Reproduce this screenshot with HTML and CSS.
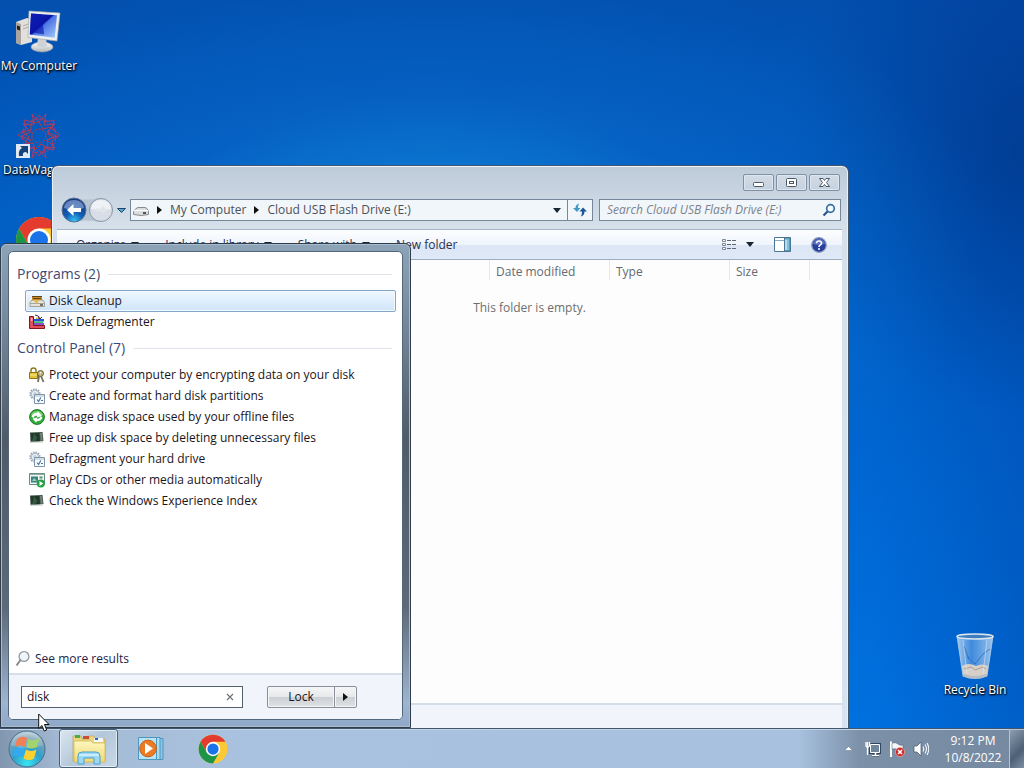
FILE: index.html
```html
<!DOCTYPE html>
<html lang="en">
<head>
<meta charset="utf-8">
<title>Desktop</title>
<link rel="stylesheet" href="styles.css">
</head>
<body>
<svg class="defs" aria-hidden="true">
  <defs>
    <linearGradient id="screen" x1="0" y1="0" x2="1" y2="1"><stop offset="0" stop-color="#1a2fc4"/><stop offset=".45" stop-color="#0712a0"/><stop offset=".5" stop-color="#4a74e6"/><stop offset="1" stop-color="#a9cdfb"/></linearGradient>
    <linearGradient id="metal" x1="0" y1="0" x2="0" y2="1"><stop offset="0" stop-color="#fdfdfd"/><stop offset="1" stop-color="#b4b8ba"/></linearGradient>
    <radialGradient id="back" cx=".5" cy=".95" r=".8"><stop offset="0" stop-color="#35c4f5"/><stop offset=".45" stop-color="#1360b8"/><stop offset="1" stop-color="#173a84"/></radialGradient>
    <linearGradient id="bin" x1="0" y1="0" x2="1" y2="0"><stop offset="0" stop-color="#c2dcf3" stop-opacity=".85"/><stop offset=".4" stop-color="#5b9ce4" stop-opacity=".7"/><stop offset="1" stop-color="#b9d6f2" stop-opacity=".85"/></linearGradient>
    <radialGradient id="orb" cx=".5" cy=".9" r=".9"><stop offset="0" stop-color="#39e4ee"/><stop offset=".45" stop-color="#2fa0cc"/><stop offset=".8" stop-color="#7fa3b8"/><stop offset="1" stop-color="#c3d6e1"/></radialGradient>
    <linearGradient id="folder" x1="0" y1="0" x2="0" y2="1"><stop offset="0" stop-color="#fdf7bf"/><stop offset="1" stop-color="#efd774"/></linearGradient>
    <symbol id="chrome" viewBox="0 0 48 48">
      <circle cx="24" cy="24" r="23" fill="#fcc934"/>
      <path d="M24 24 4.1 12.5A23 23 0 0 1 43.9 12.5H24z" fill="#e33b2e"/>
      <path d="M4.1 12.5 14 29.7 24 24V12.5z" fill="#e33b2e"/>
      <path d="M4.1 12.5 14 29.7 24 35l10-5.300L24 47A23 23 0 0 1 4.1 12.5z" fill="#1e9447"/>
      <circle cx="24" cy="24" r="11.5" fill="#fff"/><circle cx="24" cy="24" r="9" fill="#1a73e8"/>
    </symbol>
    <symbol id="settings" viewBox="0 0 16 16">
      <circle cx="6" cy="6" r="4.6" fill="#e3eaf0" stroke="#8fa1b0" stroke-width="2" stroke-dasharray="1.4 1"/>
      <circle cx="6" cy="6" r="3.6" fill="#eef3f7" stroke="#9fb0bf" stroke-width=".8"/><circle cx="6" cy="6" r="1.3" fill="#fff" stroke="#8fa1b0" stroke-width=".7"/>
      <path d="M5.5 6.5h10v9h-10z" fill="#fafdff" stroke="#7e95a9"/><path d="M6 8h9" stroke="#a8bccc"/>
      <path d="m8 11.5 1.6 2 2.2-4" fill="none" stroke="#4f6f97" stroke-width="1.2"/><path d="M12 12.5h2" stroke="#4f6f97"/>
    </symbol>
    <symbol id="monitor" viewBox="0 0 16 16">
      <path d="M1 2.5 13.5 2l1 9-13 1.200z" fill="#3d5046"/><path d="m2 3.300 8-.3 1 8.300-8.600.7z" fill="#203829"/>
      <path d="M5 3.300 8.500 8 6 11.500H3z" fill="#355943"/><path d="m11 3 2-.1.700 7.500-2 .3z" fill="#758379"/><path d="M1 12h13" stroke="#b8c1bd"/>
    </symbol>
  </defs>
</svg>

<div class="desktop">
  <main class="workspace">
    <nav class="shortcuts" aria-label="Desktop icons">
      <a class="shortcut" href="#computer">
        <svg class="shortcut-icon" viewBox="0 0 48 48" aria-hidden="true">
          <path d="m1 14 11-4 5 2v22L6 37l-5-2z" fill="#e3e0dc"/><path d="m1 14 5 2v21l-5-2z" fill="#a9a49f"/><path d="M2 17.500 5 18.500v4l-3-1z" fill="#222"/><path d="m8 18 5-2M8 21l5-2" stroke="#aaa"/>
          <ellipse cx="27" cy="39" rx="11" ry="5" fill="url(#metal)" stroke="#9b9fa2" stroke-width=".6"/><path d="m23 29 8 1 1 8q-5 2-10 0z" fill="#cfd3d5"/>
          <path d="m14 3 31 2-3 28-29-3.500z" fill="#eceff0" stroke="#a7abad" stroke-width=".7"/><path d="m16 5.500 26 1.800-2.300 22.500-25-3.200z" fill="url(#screen)"/>
          <path d="m27 6.200 2 20-14-2 1-18.700z" fill="#0a16ae" opacity=".65"/>
        </svg>
        <span>My Computer</span>
      </a>
      <a class="shortcut long" href="#datawagon">
        <svg class="shortcut-icon" viewBox="0 0 48 48" aria-hidden="true">
          <g fill="none" stroke="#b83a60" stroke-width=".9">
            <path d="m24 3 6 7 9-2-2 9 8 6-8 6 2 9-9-2-6 8-6-8-9 2 2-9-8-6 8-6-2-9 9 2z"/>
            <path d="m17 2 2 11-11-1 8 8-10 4 10 4-8 8 11-1-2 11 7-8 7 8-2-11 11 1-8-8 10-4-10-4 8-8-11 1 2-11-7 8z"/>
            <path d="m24 10 4 7 8-2-3 7 6 3-7 3 1 8-7-4-6 6-2-7-8 1 4-7-6-5 8-2v-7z" stroke="#cf3340"/>
            <circle cx="24" cy="24" r="7" stroke="#d32f38" stroke-dasharray="3 1"/><circle cx="24" cy="24" r="17" stroke-dasharray="5 2"/>
          </g>
          <path d="M1 32h14v14H1z" fill="#dfeaf6"/><path d="M4 44q-1-6 3-8L5 34h8v8l-2-2q-4 0-3 4z" fill="#164377"/>
        </svg>
        <span>DataWagon</span>
      </a>
      <a class="shortcut" href="#chrome-browser" aria-label="Google Chrome">
        <svg class="shortcut-icon" aria-hidden="true"><use href="#chrome"/></svg>
      </a>
    </nav>
    <a class="shortcut recycle" href="#recycle">
      <svg class="shortcut-icon" viewBox="0 0 48 48" aria-hidden="true">
        <path d="m6 4 6 40q12 5 24 0l6-40z" fill="url(#bin)" stroke="#b8d3ee" stroke-width=".8"/>
        <path d="m11 34 1 9q12 5 24 0l1-9q-6-3-12 0-8-4-14 0z" fill="#d8cfc8"/><path d="m13 37 7-2 4 3 8-3 3 2" stroke="#a99f98" fill="none"/>
        <path d="m16 25 8 7 8-10 7-5M13 14l5 13" fill="none" stroke="#2863b4" opacity=".7"/><path d="m12 8 4 34M36 8l-4 34" stroke="#e3f1fc" opacity=".5"/>
        <ellipse cx="24" cy="4.500" rx="18" ry="2.500" fill="#3f7cc0" stroke="#dbe6ee" stroke-width="1.600"/><path d="M12 43q12 5 24 0" fill="none" stroke="#b4bcc4" stroke-width="2.500"/>
      </svg>
      <span>Recycle Bin</span>
    </a>

    <section class="explorer" aria-label="Cloud USB Flash Drive (E:)">
      <header class="titlebar">
        <button class="caption" aria-label="Minimize"><svg width="13" height="11" viewBox="0 0 13 11"><rect x="1.500" y="5.500" width="10" height="4" rx="1" fill="#fff" stroke="#4b5868"/></svg></button>
        <button class="caption" aria-label="Maximize"><svg width="13" height="11" viewBox="0 0 13 11"><rect x="1.500" y="1.500" width="10" height="8" rx="1" fill="#fff" stroke="#4b5868"/><rect x="4.500" y="4.500" width="4" height="2" fill="#fff" stroke="#4b5868"/></svg></button>
        <button class="caption" aria-label="Close"><svg width="13" height="11" viewBox="0 0 13 11"><path d="M1.500 1.500H5L6.500 3.500 8 1.500h3.500L8.500 5.500l3 4H8l-1.500-2-1.500 2H1.500l3-4z" fill="#fff" stroke="#4b5868"/></svg></button>
      </header>
      <div class="navbar">
        <div class="history">
          <button class="plain" aria-label="Back and forward"><svg width="66" height="26" viewBox="0 0 66 26">
            <path d="M13 1q13 3 27 0v24q-14-3-27 0z" fill="#b7c4d1"/>
            <circle cx="14" cy="13" r="12" fill="url(#back)" stroke="#5b7592"/><path d="M4 11q1-8 10-8t10 8q-10 4-20 0" fill="#b8cff0" opacity=".5"/>
            <path d="m7 13 6.500-6v4H21v4h-7.500v4z" fill="#fff"/>
            <circle cx="41" cy="13" r="11.500" fill="#d7dee6" stroke="#8796a6"/><path d="M31 12q1-9 10-9t10 9q-10 2-20 0" fill="#eef2f6"/><path d="m47 13-5-4.500v3h-6v3h6v3z" fill="#dfe5eb"/>
            <path d="M57.500 11.500h8l-4 4z" fill="#4aa5d0" stroke="#24456a"/>
          </svg></button>
        </div>
        <div class="address">
          <svg width="16" height="12" viewBox="0 0 16 12" aria-hidden="true"><path d="m3 4.500 2-1h7l2 1 1.500 3v3q-7 2-15 0v-3z" fill="#dadddd" stroke="#868b8e"/><path d="M1 6.500h14" stroke="#fff"/><path d="M10 9h3" stroke="#555" stroke-width="2"/></svg>
          <span class="crumb-arrow"></span><a href="#computer">My Computer</a>
          <span class="crumb-arrow"></span><a href="#drive">Cloud USB Flash Drive (E:)</a>
          <button class="plain recent" aria-label="Previous locations"><span class="down"></span></button>
          <button class="plain refresh" aria-label="Refresh"><svg width="14" height="14" viewBox="0 0 14 14"><path d="M6 .5Q2.500 1.500 2.500 5H0l4 4 3.500-4H5Q5 3 6 .500z" fill="#3f9bc6"/><path d="M8 13.500q3.500-1 3.500-5H14l-4-4-3.500 4H9q0 3-1 5z" fill="#1b5796"/></svg></button>
        </div>
        <label class="search">
          <input type="text" placeholder="Search Cloud USB Flash Drive (E:)" aria-label="Search Cloud USB Flash Drive (E:)">
          <svg width="14" height="14" viewBox="0 0 14 14" aria-hidden="true"><circle cx="8.500" cy="5.500" r="3.800" fill="#f5faff" stroke="#38709f" stroke-width="1.700"/><path d="m5.500 8.500-4 4" stroke="#274f86" stroke-width="2.200"/></svg>
        </label>
      </div>
      <div class="pane">
        <div class="toolbar">
          <button class="plain">Organize <span class="down"></span></button>
          <button class="plain">Include in library <span class="down"></span></button>
          <button class="plain">Share with <span class="down"></span></button>
          <button class="plain">New folder</button>
          <div class="tools">
            <button class="plain view" aria-label="Change your view"><svg width="16" height="14" viewBox="0 0 16 14"><path d="M1.500 1.500h3v2h-3zM1.500 5.500h3v2h-3zM1.500 9.500h3v2h-3z" fill="#fff" stroke="#7e8893"/><path d="M6 2.500h4m1 0h4m-9 4h4m1 0h4m-9 4h4m1 0h4" stroke="#5d6974"/></svg><span class="down"></span></button>
            <button class="plain" aria-label="Show the preview pane"><svg width="17" height="15" viewBox="0 0 17 15"><path d="M.5.500h16v14H.5z" fill="#fff" stroke="#4a7694"/><path d="M1 3.500h10" stroke="#86a9c0"/><path d="M10.500 1h5.500v13h-5.500z" fill="#7fc0dc" stroke="#4a7694"/><path d="M12 3v10" stroke="#c8e7f3" stroke-width="1.500"/></svg></button>
            <button class="plain" aria-label="Help"><svg width="16" height="16" viewBox="0 0 16 16"><circle cx="8" cy="8" r="7.300" fill="#273f9c" stroke="#8e9bbd" stroke-width="1.200"/><path d="M2 7q1-5 6-5t6 5q-6 2-12 0" fill="#7188cf" opacity=".7"/><path d="M5.500 6.200Q5.700 4 8 4t2.500 2q0 1.200-1.300 2Q8 8.700 8 10" fill="none" stroke="#fff" stroke-width="1.600"/><circle cx="8" cy="12" r="1" fill="#fff"/></svg></button>
          </div>
        </div>
        <div class="files">
          <div class="tree"></div>
          <div class="listing">
            <table class="columns">
              <thead><tr><th class="name" aria-label="Name"></th><th class="mid">Date modified</th><th class="mid">Type</th><th class="size">Size</th><th aria-hidden="true"></th></tr></thead>
            </table>
            <p class="empty">This folder is empty.</p>
          </div>
        </div>
        <div class="details"></div>
      </div>
    </section>
  </main>

  <section class="menu" aria-label="Start menu">
    <div class="menu-panel">
      <div class="results">
        <h2>Programs (2)</h2>
        <a class="result selected" href="#cleanup"><svg class="icon" viewBox="0 0 16 16" aria-hidden="true"><path d="M1 9.500 3 7h11l1.500 2.500v4H1z" fill="#e5e2d8" stroke="#948f80" stroke-width=".8"/><path d="M1 10.500h14" stroke="#a7a69c"/><path d="M3 3h10v4H3z" fill="#c98c28"/><path d="M3 3.500h10M4 5.500h8" stroke="#5f4310"/><path d="m4 7 4 4 2-4z" fill="#e6b55a"/><path d="M11 12h3" stroke="#505050" stroke-width="1.500"/></svg>Disk Cleanup</a>
        <a class="result" href="#defragmenter"><svg class="icon" viewBox="0 0 16 16" aria-hidden="true"><path d="M.5 2.500h4v9h11v3H.5z" fill="#e2505a" stroke="#84131f"/><path d="M5 5h10v2.500H5z" fill="#2952dc"/><path d="M5 7.500h9V9H5z" fill="#35c653"/><path d="M5 9h10v2H5z" fill="#8a4fd0"/><path d="M7 3.500h5V5H7z" fill="#e5b93a"/><path d="M6 1q4 0 5 4M9 3.500 11 5l2-2" fill="none" stroke="#302c62"/><path d="M2 4h1.500v3H2z" fill="#fbc0c0"/></svg>Disk Defragmenter</a>
        <h2>Control Panel (7)</h2>
        <a class="result" href="#bitlocker"><svg class="icon" viewBox="0 0 16 16" aria-hidden="true"><path d="M2 6V3.500Q2 1 4.500 1T7 3.500V6" fill="none" stroke="#8f7b25" stroke-width="1.500"/><path d="M.5 5.500h8v6h-8z" fill="#e0c23b" stroke="#8e7419"/><path d="M1 8h7" stroke="#f8ea91"/><circle cx="11.500" cy="6.500" r="3" fill="#c7b67a" stroke="#5d5941"/><circle cx="11.500" cy="5.800" r=".8" fill="#fff"/><path d="m10 9-1 6M12 9l2.500 6" stroke="#75705b" stroke-width="1.800"/></svg>Protect your computer by encrypting data on your disk</a>
        <a class="result" href="#partitions"><svg class="icon" aria-hidden="true"><use href="#settings"/></svg>Create and format hard disk partitions</a>
        <a class="result" href="#offline"><svg class="icon" viewBox="0 0 16 16" aria-hidden="true"><circle cx="8" cy="8" r="7.400" fill="#35ac3e" stroke="#197925"/><path d="M2 6q2-4 6-4 4 0 6 4-6 2-12 0" fill="#90dd80" opacity=".8"/><path d="M2.500 7.500Q4 3.500 8 4l1-1.500L13 7 8 8.500V6.500Q5.500 6 4.500 9zM13.500 8.500Q12 12.500 8 12l-1 1.500L3.500 9.500 8 8.500v1.200q2.500.3 3.500-2.200z" fill="#fff"/></svg>Manage disk space used by your offline files</a>
        <a class="result" href="#free"><svg class="icon" aria-hidden="true"><use href="#monitor"/></svg>Free up disk space by deleting unnecessary files</a>
        <a class="result" href="#defragment"><svg class="icon" aria-hidden="true"><use href="#settings"/></svg>Defragment your hard drive</a>
        <a class="result" href="#autoplay"><svg class="icon" viewBox="0 0 16 16" aria-hidden="true"><path d="M.5 1.500h15v11H.5z" fill="#eef5f2" stroke="#688b80"/><path d="M1 2.500h14" stroke="#90b2a6"/><path d="M2 4.500h7v6H2z" fill="#3c817f"/><path d="m3 9 2-3 3 3z" fill="#9ad1b1"/><path d="M10.500 5.500h3" stroke="#5e8c7d" stroke-width="2"/><circle cx="11.800" cy="11.500" r="4" fill="#24a142"/><path d="m10.500 9 3.800 2.500-3.800 2.500z" fill="#fff"/></svg>Play CDs or other media automatically</a>
        <a class="result" href="#experience"><svg class="icon" aria-hidden="true"><use href="#monitor"/></svg>Check the Windows Experience Index</a>
      </div>
      <a class="more" href="#more"><svg width="16" height="18" viewBox="0 0 16 18" aria-hidden="true"><circle cx="9" cy="6.500" r="4.900" fill="#eef5fa" stroke="#92999f" stroke-width="1.300"/><path d="M7 5q1-2 3-1.500" stroke="#fff" stroke-width="1.500" fill="none"/><path d="m5.500 10-4 5.500" stroke="#858b90" stroke-width="2"/></svg>See more results</a>
      <form class="menu-foot">
        <div class="query"><input type="text" value="disk" aria-label="Search programs and files"><button type="button" class="plain" aria-label="Clear search"><svg width="8" height="8" viewBox="0 0 8 8"><path d="m1 1 6 6m0-6-6 6" stroke="#6c747c" stroke-width="1.200"/></svg></button></div>
        <div class="power"><button type="button">Lock</button><button type="button" aria-label="More options"><span class="crumb-arrow"></span></button></div>
      </form>
    </div>
  </section>

  <footer class="taskbar">
    <button class="plain start" aria-label="Start"><svg width="38" height="38" viewBox="0 0 38 38">
      <circle cx="19" cy="19" r="18" fill="url(#orb)" stroke="#486f8b"/>
      <path d="M9 9q5-4 10-1l-2 9q-5-3-10 0z" fill="#f0602a"/><path d="M20.500 9q5 3 11-1l-2.500 9q-5 3-10.500 0z" fill="#8cc846"/>
      <path d="M6.500 18.500q5-3 10 0l-2 9q-5-3-10-1z" fill="#35a9f0"/><path d="M18 19.500q5 3 10.500 0l-2.500 9q-5 3-10.500 0z" fill="#fdd032"/>
      <path d="M3 15Q6 3 19 2.500T35 15q-16 7-32 0" fill="#fff" opacity=".2"/>
    </svg></button>
    <button class="plain task active" aria-label="Windows Explorer"><svg width="36" height="32" viewBox="0 0 36 32">
      <path d="M2 5V3h8l1 3h7V3h5l1 3h10v22H2z" fill="#ecd67c" stroke="#bda550" stroke-width=".7"/><path d="M4 2h5v3H4z" fill="#4caa4b"/><path d="M12 3h6v3h-6z" fill="#c94f38"/><path d="M23 5h9v4h-9z" fill="#f4f7fb"/><path d="M24 5h3v2h-3z" fill="#3265b5"/>
      <path d="M3 8h17l2 2h12v19H3z" fill="url(#folder)" stroke="#cfb558" stroke-width=".7"/>
      <path d="M7 31v-8q0-4 4-4h14q4 0 4 4v8h-6v-6H13v6z" fill="#9bd8f4" stroke="#4f9fcb"/><path d="M8 22h20" stroke="#d8f4ff" stroke-width="1.500"/>
    </svg></button>
    <button class="plain task" aria-label="Media Player"><svg width="28" height="26" viewBox="0 0 28 26">
      <path d="M10 2.500h16v21H10z" fill="#8bc6e5" stroke="#4d96be"/><path d="M6 1.500h17v22H6z" fill="#aadcf1" stroke="#4d96be"/><path d="M1.500 1.500h18v22h-18z" fill="#b9e3f3" stroke="#4d96be"/>
      <circle cx="11" cy="12.500" r="8.300" fill="#ec7b23" stroke="#c85d17"/><path d="m8 7 8 5.500L8 18z" fill="#fff"/>
    </svg></button>
    <button class="plain task" aria-label="Google Chrome"><svg width="30" height="30"><use href="#chrome"/></svg></button>
    <div class="tray">
      <button class="plain" aria-label="Show hidden icons"><svg width="9" height="5" viewBox="0 0 9 5"><path d="M.5 4.500 4.500.500l4 4z" fill="#fff" stroke="#64778d" stroke-width=".5"/></svg></button>
      <button class="plain" aria-label="Network"><svg width="16" height="16" viewBox="0 0 16 16"><path d="M5.500 3.500h9v8h-9zM7 14.500h7M10.500 12v2" fill="none" stroke="#30465e" stroke-width="3"/><path d="M5.500 3.500h9v8h-9z" fill="#71869c" stroke="#fff"/><path d="M7 14.500h7M10.500 12v2" stroke="#fff" stroke-width="1.500"/><path d="M1 1v4q0 1 1.500 1T4.500 5V1M2.500 1v13" fill="none" stroke="#fff" stroke-width="1.300"/></svg></button>
      <button class="plain" aria-label="Action Center"><svg width="16" height="16" viewBox="0 0 16 16"><path d="M2 .500V16" stroke="#fff" stroke-width="2"/><path d="M3 2q4-1 6 1t5 1v6q-3 1-5-1T3 8z" fill="#f5f7f9" stroke="#435970" stroke-width=".5"/><circle cx="11" cy="11" r="4.600" fill="#cf2b2b" stroke="#f2a8a8" stroke-width=".7"/><path d="m9 9 4 4m0-4-4 4" stroke="#fff" stroke-width="1.600"/></svg></button>
      <button class="plain" aria-label="Volume"><svg width="16" height="16" viewBox="0 0 16 16"><path d="M1 5h3l4-4v14l-4-4H1z" fill="#fff" stroke="#42566b" stroke-width=".7"/><path d="M10 5.500q1.500 2.500 0 5M12 3.500q3 4.500 0 9M14 2q3.500 6 0 12" fill="none" stroke="#f3f7fa" stroke-width="1.100"/></svg></button>
      <button class="plain clock"><time>9:12 PM</time><time>10/8/2022</time></button>
      <button class="plain peek" aria-label="Show desktop"></button>
    </div>
  </footer>
  <svg class="pointer" width="12" height="19" viewBox="0 0 12 19" aria-hidden="true"><path d="M.700 1v14.500L4 12.500l2.200 5.500 2.500-1L6.500 11.500H11z" fill="#fff" stroke="#111"/></svg>
</div>
</body>
</html>
```

FILE: styles.css
```css
* { box-sizing: border-box; }

body {
  margin: 0;
  font: 12px/16px "Open Sans", "Noto Sans", sans-serif;
  color: #1b1420;
}

a { color: inherit; text-decoration: none; }
button, input { font: inherit; color: inherit; }
svg { display: block; flex: none; }
.defs { position: absolute; width: 0; height: 0; }

.plain {
  display: flex;
  align-items: center;
  justify-content: center;
  padding: 0;
  border: 0;
  background: none;
}

.desktop {
  position: relative;
  display: flex;
  flex-direction: column;
  height: 100vh;
  overflow: hidden;
  background:
    radial-gradient(ellipse 560px 300px at 42% 32%, rgba(24, 146, 226, .8), rgba(10, 110, 206, .45) 50%, transparent),
    radial-gradient(ellipse 240px 260px at 100% 20%, rgba(0, 50, 130, .6), transparent),
    linear-gradient(90deg, transparent 85%, rgba(0, 62, 160, .35)),
    linear-gradient(#024fae, #005cc2 30%, #0068d4 65%, #0072e0);
}

.workspace {
  flex: 1;
  display: flex;
  justify-content: space-between;
  align-items: flex-end;
  min-height: 0;
}

.shortcuts {
  align-self: flex-start;
  display: flex;
  flex-direction: column;
  gap: 36px;
  padding-top: 8px;
}

.shortcut {
  display: flex;
  flex-direction: column;
  align-items: center;
  gap: 2px;
  width: 78px;
  color: #fff;
  text-shadow: 0 1px 2px #000, 1px 1px 2px #000;
  white-space: nowrap;
}
.shortcuts .shortcut { height: 68px; }
.shortcut-icon { width: 48px; height: 48px; }
.long span { align-self: flex-start; padding-left: 3px; }
.recycle { width: 98px; padding-bottom: 30px; }

/* Explorer window */
.explorer {
  position: absolute;
  inset: 165px 175px 40px 51px;
  display: flex;
  flex-direction: column;
  padding: 0 6px 0 5px;
  border: 1px solid #44566b;
  border-bottom: 0;
  border-radius: 7px 7px 0 0;
  background: linear-gradient(#bdcad8, #d5e0ea 60px, #d6e3f0);
  box-shadow: inset 0 1px #eef4fa, inset 1px 0 #e9f1f8, inset -1px 0 #e9f1f8;
}
.titlebar { display: flex; justify-content: flex-end; gap: 2px; padding: 8px 2px 0; }
.caption {
  display: flex;
  align-items: center;
  justify-content: center;
  width: 31px;
  height: 17px;
  padding: 0;
  border: 1px solid #8190a3;
  border-radius: 2px;
  background: linear-gradient(#d2dce7, #c5d1de);
  box-shadow: inset 0 0 0 1px #dde6ee;
}
.navbar { display: flex; align-items: center; gap: 6px; padding: 6px 1px 6px 3px; }
.history { margin-right: -2px; }
.address, .search {
  display: flex;
  align-items: center;
  height: 22px;
  border: 1px solid #77879a;
  background: #f1f6fb;
  color: #4c5158;
}
.address { flex: 1; gap: 8px; padding-left: 2px; }
.crumb-arrow {
  border: 4px solid transparent;
  border-left: 5px solid #111;
  border-right: 0;
}
.down {
  border: 4px solid transparent;
  border-top: 5px solid #1a2533;
  border-bottom: 0;
}
.recent { margin: 0 -2px 0 auto; }
.refresh { width: 25px; height: 20px; border-left: 1px solid #77879a; }
.search { width: 242px; padding: 0 4px 0 7px; }
.search input { flex: 1; min-width: 0; padding: 0; border: 0; outline: 0; background: none; font-style: italic; }
.search input::placeholder { color: #7d828a; opacity: 1; }

.pane { flex: 1; display: flex; flex-direction: column; min-height: 0; background: #fdfdfd; }
.toolbar {
  display: flex;
  align-items: center;
  height: 31px;
  padding: 0 15px 0 19px;
  gap: 26px;
  border-top: 1px solid #a5b5c7;
  border-bottom: 1px solid #9fadc1;
  background: linear-gradient(#fdfeff, #eff4fc 50%, #dde6f5 51%, #dfe8f6);
  color: #2b2f4c;
}
.toolbar .plain { gap: 5px; }
.tools { display: flex; align-items: center; gap: 20px; margin-left: auto; }
.toolbar .view { gap: 9px; }
.files { flex: 1; display: flex; min-height: 0; }
.tree { width: 160px; }
.listing { flex: 1; }
.columns { width: 100%; height: 20px; border-spacing: 0; table-layout: fixed; }
.columns th { height: 20px; padding: 4px 6px 0; border-right: 1px solid #e3e9f0; font-weight: 400; text-align: left; color: #646a73; }
.columns th:last-child { border: 0; }
.name { width: 273px; }
.mid { width: 120px; }
.size { width: 80px; }
.empty { margin: 20px 0 0; text-align: center; color: #6d6d6d; }
.details { height: 25px; border-top: 2px solid #d5dde8; background: #f1f5fb; }

/* Start menu */
.menu {
  position: absolute;
  left: 0;
  bottom: 40px;
  width: 411px;
  height: 485px;
  padding: 7px;
  border: 1px solid #303d4c;
  border-radius: 6px 6px 0 0;
  background: linear-gradient(#8ca3b8, #778b9f 15%, #505b66 40%, #5c6977 75%, #9eb4cf 95%, #8fa8c8);
  box-shadow: inset 0 0 0 1px #a9bccd;
}
.menu-panel {
  display: flex;
  flex-direction: column;
  height: 100%;
  border: 1px solid #53677c;
  border-radius: 5px;
  background: #fff;
  overflow: hidden;
}
.results { flex: 1; padding: 6px 6px 0 16px; }
.results h2 {
  display: flex;
  align-items: center;
  gap: 8px;
  height: 32px;
  margin: 0 4px 0 -8px;
  font-size: 14px;
  font-weight: 400;
  color: #3d4a76;
}
.results h2::after { content: ""; flex: 1; border-top: 1px solid #dfe4ea; }
.result {
  display: flex;
  align-items: center;
  gap: 4px;
  height: 21px;
  padding-left: 3px;
  border: 1px solid transparent;
  border-radius: 2px;
}
.selected { height: 22px; margin-bottom: -1px; border-color: #83a7cb; background: linear-gradient(#eff7fe, #cfe5fb); box-shadow: inset 0 0 0 1px #f3f9ff; }
.icon { width: 16px; height: 16px; }
.more { display: flex; align-items: center; gap: 4px; height: 28px; padding-left: 6px; color: #1e2347; }
.menu-foot { display: flex; align-items: center; gap: 24px; height: 46px; margin: 0; padding-left: 12px; border-top: 2px solid #d7dee8; background: #f1f5fb; }
.query { display: flex; width: 222px; height: 22px; border: 1px solid #53606f; background: #fff; }
.query input { flex: 1; min-width: 0; padding: 0 5px; border: 0; outline: 0; background: none; }
.query .plain { width: 24px; }
.power { display: flex; height: 22px; }
.power button {
  display: flex;
  align-items: center;
  justify-content: center;
  width: 68px;
  padding: 0;
  border: 1px solid #8b9098;
  border-radius: 2px 0 0 2px;
  background: linear-gradient(#f6f7f8, #e6e8ea 48%, #cdd0d4 52%, #dfe1e4);
  box-shadow: inset 0 0 0 1px #f5f6f7;
}
.power button + button { width: 23px; margin-left: -1px; border-radius: 0 2px 2px 0; }

/* Taskbar */
.taskbar {
  position: relative;
  display: flex;
  align-items: center;
  height: 40px;
  border-top: 1px solid #40566e;
  background: linear-gradient(90deg, #8197b0, #a4bad4 60px, #a9c2df 250px, #a7c1de 78%, #7c90a8 84%, #7589a1);
  box-shadow: inset 0 1px #c5d6e7;
}
.start { width: 54px; }
.task { width: 59px; height: 39px; margin-right: 3px; }
.start + .task { margin-left: 5px; }
.active { border: 1px solid #4b6178; border-radius: 3px; background: linear-gradient(135deg, #dbe6f0, #b3c7da 50%, #c8d8e7); box-shadow: inset 0 0 0 1px #e2ecf5; }
.tray { display: flex; align-items: center; gap: 8px; height: 100%; margin-left: auto; }
.tray .plain:first-child { margin-right: 4px; }
.clock { flex-direction: column; width: 72px; color: #fff; line-height: 17px; }
.peek { width: 15px; height: 39px; margin-left: -8px; border: 1px solid #b4c3d1; border-width: 1px 0 0 1px; background: linear-gradient(135deg, #8c9db0, #4d6075 60%, #7d8fa3); }
.pointer { position: absolute; left: 38px; bottom: 36px; }
```
